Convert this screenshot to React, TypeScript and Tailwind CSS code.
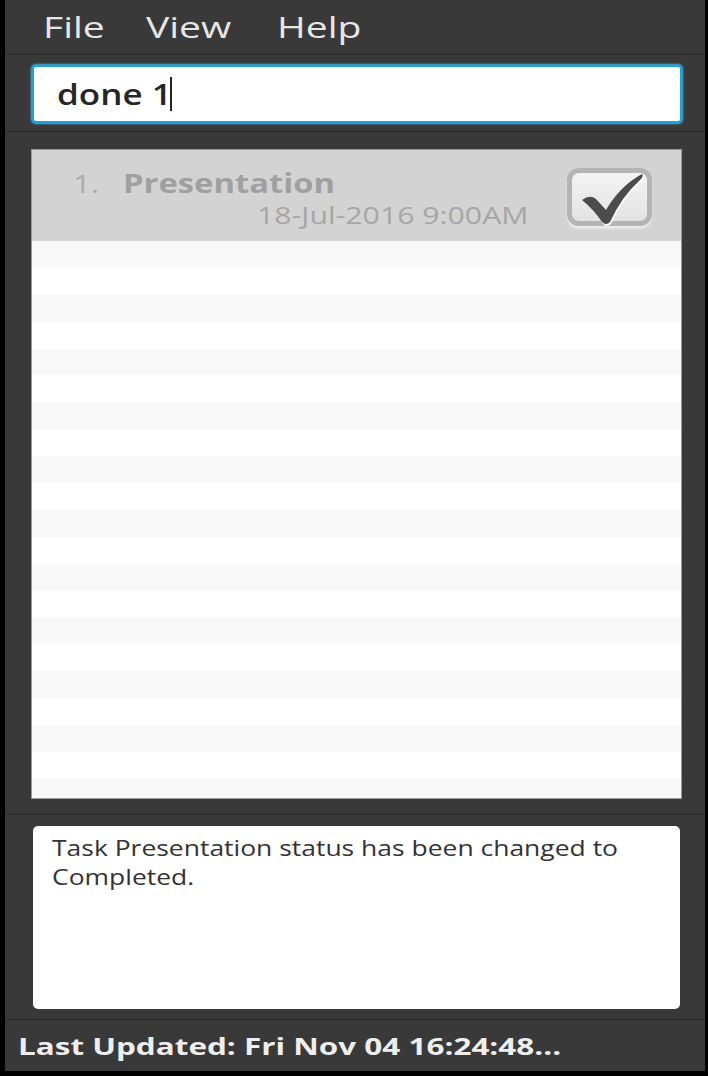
import React from "react";

const font = { fontFamily: '"Open Sans", "Noto Sans", sans-serif' };

function CheckBox() {
  return (
    <div className="relative w-[85px] h-[60px]">
      <div className="absolute left-0 top-0 w-[85px] h-[58px] rounded-[12px] bg-[#b4b4b4] shadow-[0_3px_2px_rgba(255,255,255,0.5)]">
        <div className="absolute left-[5px] top-[5px] right-[5px] bottom-[5px] rounded-[7px] bg-gradient-to-b from-[#f4f4f4] to-[#e2e2e2]" />
      </div>
      <svg className="absolute left-[13px] top-[4px]" width="66" height="54" viewBox="0 0 66 54">
        <path d="M2 28 Q10 22 16 27 L26 38 Q40 14 62 2 Q64 4 60 8 Q42 24 30 50 Q26 54 22 50 Q14 38 2 28 Z" fill="#f8f8f8" transform="translate(1,2)" />
        <path d="M2 28 Q10 22 16 27 L26 38 Q40 14 62 2 Q64 4 60 8 Q42 24 30 50 Q26 54 22 50 Q14 38 2 28 Z" fill="#4c4c4c" />
      </svg>
    </div>
  );
}

export default function App() {
  const rows = Array.from({ length: 21 });
  return (
    <div style={font} className="w-[708px] h-[1076px] bg-black flex flex-col">
      <div className="flex-1 ml-[5px] mr-[3px] mb-[5px] bg-[#393939] flex flex-col">
        {/* Menu */}
        <div className="h-[55px] flex items-center border-b border-[#2c2c2c] pl-[38px] text-[30px] text-[#e6e6e6] leading-none">
          <div className="w-[103px]">
            <span className="inline-block origin-left scale-x-[1.3]">File</span>
          </div>
          <div className="w-[131px]">
            <span className="inline-block origin-left scale-x-[1.3]">View</span>
          </div>
          <div>
            <span className="inline-block origin-left scale-x-[1.3]">Help</span>
          </div>
        </div>
        {/* Command box */}
        <div className="h-[77px] border-b border-[#2c2c2c] flex items-center pl-[27px] pr-[23px] pt-[1px]">
          <div className="w-full h-[58px] rounded-[4px] border-[2px] border-[#1fa2dc] shadow-[0_0_2px_1px_#3fb8e8] bg-white flex items-center pl-[23px]">
            <span className="inline-block origin-left scale-x-[1.25] w-[89px] text-[28px] font-semibold text-[#262626] leading-none whitespace-nowrap">done 1</span>
            <span className="ml-[24px] w-[2px] h-[34px] bg-[#222]" />
          </div>
        </div>
        {/* List */}
        <div className="h-[683px] border-b border-[#2c2c2c] px-[26px] pt-[17px]">
          <div className="w-[651px] h-[650px] border border-[#9a9a9a] bg-white overflow-hidden flex flex-col">
            <div className="h-[91px] shrink-0 bg-[#d3d3d3] flex items-start">
              <div className="flex-1 pl-[41px] pt-[14px]">
                <div className="flex items-baseline">
                  <span className="w-[50px]">
                    <span className="inline-block origin-left scale-x-[1.25] text-[25px] text-[#ababab]">1.</span>
                  </span>
                  <span className="inline-block origin-left scale-x-[1.26] text-[26px] font-bold text-[#a0a0a0]">Presentation</span>
                </div>
                <div className="text-right pr-[39px] -mt-[6px]">
                  <span className="inline-block origin-right scale-x-[1.26] text-[24px] text-[#a6a6a6]">18-Jul-2016 9:00AM</span>
                </div>
              </div>
              <div className="pt-[18px] pr-[29px]">
                <CheckBox />
              </div>
            </div>
            {rows.map((_, i) => (
              <div key={i} className={`h-[26.9px] shrink-0 ${i % 2 === 0 ? "bg-[#f8f8f8]" : "bg-white"}`} />
            ))}
          </div>
        </div>
        {/* Result */}
        <div className="h-[205px] border-b border-[#2c2c2c] px-[28px] pt-[11px]">
          <div className="w-[647px] h-[183px] bg-white rounded-[5px] px-[19px] pt-[8px]">
            <div className="w-[487px] origin-left scale-x-[1.26] text-[21px] leading-[29px] text-[#333]">
              Task Presentation status has been changed to Completed.
            </div>
          </div>
        </div>
        {/* Status */}
        <div className="flex-1 flex items-center pl-[13px] text-[24px] font-bold text-[#eeeeee]">
          <span className="inline-block origin-left scale-x-[1.31] whitespace-nowrap">Last Updated: Fri Nov 04 16:24:48...</span>
        </div>
      </div>
    </div>
  );
}
